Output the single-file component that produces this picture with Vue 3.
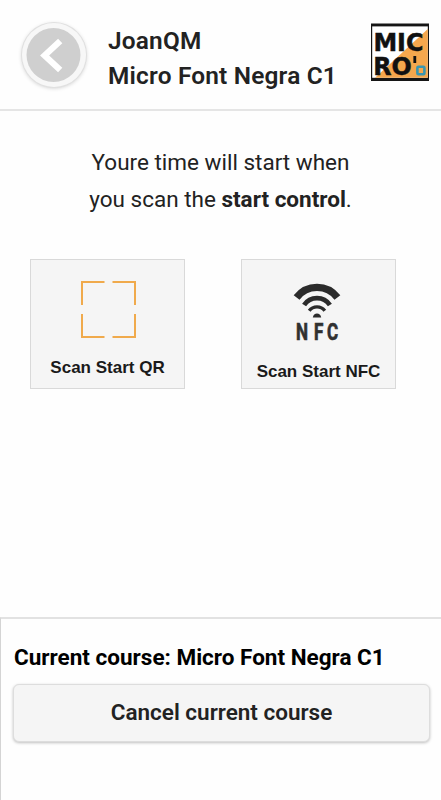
<template>
  <div class="page">
    <header class="header">
      <button class="back" aria-label="Back" @click="goBack">
        <svg width="64" height="64" viewBox="0 0 64 64">
          <circle cx="31.5" cy="32" r="27" fill="#cfcfcf" />
          <path d="M38.2 18L22.6 32.5L38.2 47" fill="none" stroke="#fff" stroke-width="6.2" />
        </svg>
      </button>
      <div class="titles">
        <div class="user">{{ user }}</div>
        <div class="course">{{ course }}</div>
      </div>
      <svg class="logo" width="58" height="58" viewBox="0 0 58 58">
        <rect y=".5" width="58" height="57.5" fill="#151515" />
        <rect x="1.2" y="3.4" width="55.6" height="51.4" fill="#fff" />
        <path d="M56.8 6V54.8H4Z" fill="#f5a74d" />
        <text class="logo-text" font-size="25">
          <tspan x="2.4" y="28" textLength="50" lengthAdjust="spacingAndGlyphs">MIC</tspan>
          <tspan x="2.2" y="52" textLength="38.5" lengthAdjust="spacingAndGlyphs">RO</tspan>
        </text>
        <rect x="42.4" y="33" width="2.8" height="7" fill="#111" />
        <rect x="46.4" y="43.8" width="7" height="7.4" rx="1" fill="none" stroke="#3996b0" stroke-width="2.6" />
      </svg>
    </header>

    <main class="main">
      <p class="message">
        <span class="line">Youre time will start when</span>
        <span class="line">you scan the <b>start control</b>.</span>
      </p>
      <div class="actions">
        <button class="scan qr" @click="setMode('qr')">
          <svg width="55" height="57" viewBox="0 0 55 57">
            <path
              d="M23.5 1H1V24M31.5 1H54V24M1 33V56H23.5M31.5 56H54V33"
              fill="none" stroke="#f0aa4c" stroke-width="2"
            />
          </svg>
          <span class="scan-label">Scan Start QR</span>
        </button>
        <button class="scan nfc" @click="setMode('nfc')">
          <svg width="53" height="66" viewBox="0 0 53 66">
            <g fill="none" stroke="#2b2b2b">
              <path d="M4.6 19.5A25.5 25.5 0 0 1 45.4 19.5" stroke-width="7.3" />
              <path d="M12.1 27A15.5 15.5 0 0 1 37.9 27" stroke-width="4.8" />
              <path d="M17.2 32.8A9.7 9.7 0 0 1 32.8 32.8" stroke-width="3.4" />
            </g>
            <path d="M20.8 39.6C21.4 34.2 28.6 34.2 29.2 39.6Z" fill="#2b2b2b" />
            <text class="nfc-text" transform="scale(.74 1)" x="5.4 29.8 47.4" y="61.8" font-size="23">NFC</text>
          </svg>
          <span class="scan-label">Scan Start NFC</span>
        </button>
      </div>
    </main>

    <footer class="footer">
      <div class="current">Current course: {{ course }}</div>
      <button class="cancel" @click="cancelCourse">Cancel current course</button>
    </footer>
  </div>
</template>

<script setup>
import { ref } from 'vue'

const user = ref('JoanQM')
const course = ref('Micro Font Negra C1')
const mode = ref(null)

const setMode = (value) => {
  mode.value = value
}

const goBack = () => window.history.back()

const cancelCourse = () => {
  mode.value = null
}
</script>

<style>
body {
  margin: 0;
  background: #fefefe;
}
</style>

<style scoped>
.page {
  height: 800px;
  display: flex;
  flex-direction: column;
  font-family: Roboto, sans-serif;
  color: #222;
  overflow: hidden;
}

button {
  font-family: inherit;
  color: inherit;
  box-sizing: border-box;
  padding: 0;
  cursor: pointer;
}

.header {
  box-sizing: border-box;
  height: 111px;
  flex: none;
  display: flex;
  align-items: flex-start;
  padding: 23px 12px 0 22px;
  border-bottom: 2px solid #e5e5e5;
}

.back {
  width: 64px;
  height: 64px;
  border: 0;
  border-radius: 50%;
  background: #f7f7f7;
  box-shadow: 0 0 0 1px #e0e0e0, 0 1px 4px rgba(0, 0, 0, .22);
}

.back svg {
  display: block;
}

.titles {
  flex: 1;
  margin-left: 22px;
  font-size: 24.4px;
  font-weight: 600;
  letter-spacing: .2px;
  line-height: 35px;
  white-space: nowrap;
}

.logo {
  flex: none;
}

.logo-text {
  font-family: "DejaVu Sans", sans-serif;
  font-weight: 700;
  fill: #111;
  stroke: #111;
  stroke-width: .5px;
}

.main {
  flex: 1;
}

.message {
  margin: 33px 0 0;
  font-size: 22.5px;
  line-height: 36.5px;
  text-align: center;
}

.line {
  display: block;
}

.actions {
  display: flex;
  justify-content: space-between;
  margin: 42px 45px 0 30px;
}

.scan {
  width: 155px;
  height: 130px;
  display: flex;
  flex-direction: column;
  align-items: center;
  justify-content: flex-start;
  padding-top: 21px;
  border: 1px solid #d9d9d9;
  background: #f5f5f5;
}

.qr svg {
  margin-left: 2px;
}

.scan-label {
  margin-top: 20px;
  font: 700 17px/20px "Liberation Sans", Arial, sans-serif;
  color: #1a1a1a;
  white-space: nowrap;
}

.nfc {
  padding-top: 18px;
}

.nfc .scan-label {
  margin-top: 18px;
}

.nfc-text {
  font-family: Roboto, sans-serif;
  font-weight: 700;
  fill: #303030;
  stroke: #303030;
  stroke-width: .7px;
}

.footer {
  box-sizing: border-box;
  height: 183px;
  padding: 21px 11px 0 12px;
  border-top: 2px solid #e2e2e2;
  border-left: 1px solid #d4d4d4;
}

.current {
  margin-left: 1px;
  font-size: 22.5px;
  font-weight: 700;
  line-height: 34px;
  color: #000;
  white-space: nowrap;
}

.cancel {
  display: block;
  width: 100%;
  height: 58px;
  margin-top: 10px;
  padding-bottom: 2px;
  border: 1px solid #ddd;
  border-radius: 6px;
  background: #f5f5f5;
  box-shadow: 0 1px 3px rgba(0, 0, 0, .25);
  font-size: 22.5px;
  font-weight: 600;
}
</style>
